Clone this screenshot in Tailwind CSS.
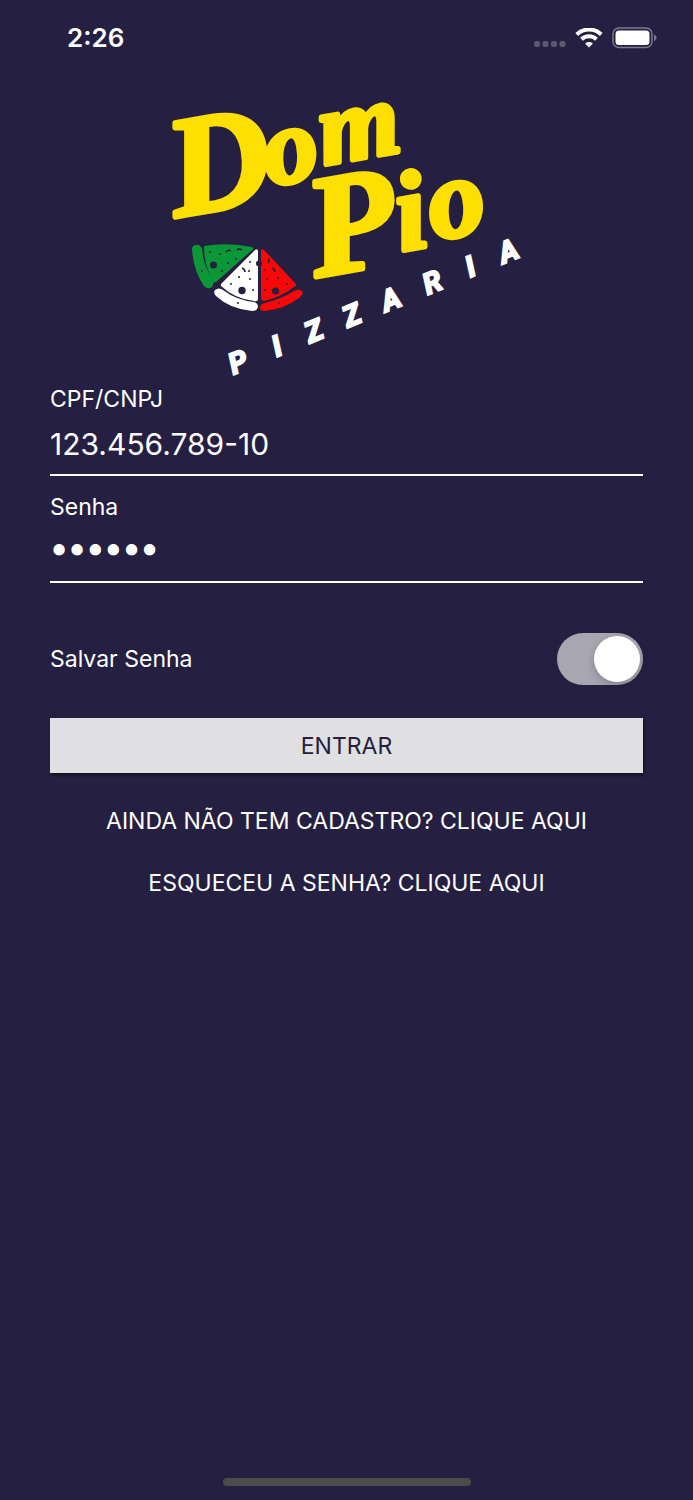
<!DOCTYPE html>
<html lang="pt-BR">
<head>
<meta charset="utf-8">
<meta name="viewport" content="width=device-width, initial-scale=1">
<title>Dom Pio Pizzaria</title>
<script src="https://cdn.jsdelivr.net/npm/@tailwindcss/browser@4"></script>
</head>
<body class="flex min-h-screen flex-col bg-[#252041] font-['Inter','Liberation_Sans',sans-serif] text-[23px] leading-7 text-white">
  <header class="flex h-20 items-start justify-between pt-6 pr-9 pl-[67px]">
    <time class="text-[26px] leading-7 font-semibold">2:26</time>
    <div class="flex h-7 items-center gap-[9px]">
      <svg class="mt-3 h-2 w-8" viewBox="0 0 32 8" fill="#5c5870" aria-hidden="true">
        <rect x="0" y="1" width="6" height="6" rx="2.300"/><rect x="8.500" y="1" width="6" height="6" rx="2.300"/><rect x="17" y="1" width="6" height="6" rx="2.300"/><rect x="25.500" y="1" width="6" height="6" rx="2.300"/>
      </svg>
      <svg class="h-5 w-7" viewBox="0 0 28 20" fill="none" stroke="#fff" aria-hidden="true">
        <path d="M1.800 6.500C8.500-.2 19.500-.2 26.200 6.500" stroke-width="4"/>
        <path d="M6.500 11.200C10.700 7.200 17.300 7.200 21.500 11.200" stroke-width="4"/>
        <path d="M10.200 15.600C12.300 13.600 15.700 13.600 17.800 15.600L14 19.500Z" fill="#fff" stroke="none"/>
      </svg>
      <svg class="h-[22px] w-[45px]" viewBox="0 0 45 22" aria-hidden="true">
        <rect x="1" y="1" width="39" height="19.500" rx="6" fill="none" stroke="#7c798d" stroke-width="1.500"/>
        <rect x="3.500" y="3.500" width="34" height="14.500" rx="3.500" fill="#fff"/>
        <path d="M42 7.500C45.300 8.800 45.300 12.700 42 14Z" fill="#7c798d"/>
      </svg>
    </div>
  </header>

  <main class="flex flex-col px-[50px]">
    <svg class="h-[300px] w-[370px] self-center overflow-visible" viewBox="162 80 370 300" role="img" aria-label="Dom Pio Pizzaria">
      <g fill="#fde000" stroke="#fde000" stroke-linejoin="round" font-family="Liberation Serif" font-weight="700" font-style="italic">
        <text transform="translate(176 217) rotate(-10)" font-size="142" stroke-width="5">D</text>
        <text transform="translate(269 186) rotate(-10)" font-size="108" stroke-width="5">o</text>
        <text transform="translate(324 165) rotate(-10)" font-size="104" stroke-width="5">m</text>
        <text transform="translate(316 277) rotate(-10)" font-size="144" stroke-width="5">P</text>
        <text transform="translate(401 251) rotate(-10)" font-size="112" stroke-width="5">i</text>
        <text transform="translate(434 240) rotate(-10)" font-size="112" stroke-width="5">o</text>
      </g>
      <g stroke-linejoin="round">
        <path d="M204 246Q228 242 252 247Q255 249 251 251L216 282Q214 283 212 280Q204 264 204 246Z" fill="#0b9735"/>
        <path d="M192 248Q194 244 199 245L202 248Q203 266 214 282L212 287Q208 290 204 286Q193 270 192 248Z" fill="#0b9735"/>
        <path d="M255 250Q258 248 258 252V299Q258 302 254 301Q235 299 221 286Q220 284 223 282Z" fill="#fff"/>
        <path d="M215 290Q219 287 223 290Q236 300 254 302Q258 303 258 307Q257 311 252 311Q230 309 216 296Q213 293 215 290Z" fill="#fff"/>
        <path d="M261 250Q263 248 266 252L295 283Q298 285 294 287Q281 297 264 301Q261 301 261 297Z" fill="#f90606"/>
        <path d="M265 303Q281 299 294 291Q299 288 302 291Q304 294 299 298Q284 309 265 311Q260 311 260 308Q260 304 265 303Z" fill="#f90606"/>
      </g>
      <g fill="#252041">
        <circle cx="213.500" cy="265" r="3.500"/><circle cx="242" cy="290.500" r="3.700"/><circle cx="275.500" cy="291" r="3.500"/><circle cx="259" cy="263.500" r="3"/>
        <circle cx="202" cy="271" r="1"/><circle cx="210" cy="252" r="1"/><circle cx="220" cy="254" r="1"/><circle cx="228" cy="263" r="1"/><circle cx="222" cy="271" r="1"/><circle cx="236" cy="259" r="1"/>
        <circle cx="250" cy="262" r="1"/><circle cx="249" cy="271" r="1"/><circle cx="239" cy="277" r="1"/><circle cx="250" cy="279" r="1"/><circle cx="231" cy="284" r="1"/><circle cx="253" cy="290" r="1"/><circle cx="238" cy="303" r="1"/>
        <circle cx="265" cy="270" r="1"/><circle cx="267" cy="279" r="1"/><circle cx="278" cy="278" r="1"/><circle cx="265" cy="290" r="1"/><circle cx="287" cy="284" r="1"/><circle cx="279" cy="303" r="1"/>
      </g>
      <g fill="none" stroke="#252041" stroke-width="1.500">
        <path d="M226 252Q228 249 231 251M237 250Q239 248 242 250M242 268Q245 269 245 272M268 259Q270 260 268 263M272 268Q275 269 275 272"/>
      </g>
      <text transform="translate(238 362) rotate(-22.300)" y="10" x="0 42 82 123 165 210 251 292" fill="#fff" stroke="#fff" stroke-width="2" font-family="Liberation Sans Narrow, Roboto" font-weight="700" font-style="italic" font-size="29" text-anchor="middle">PIZZARIA</text>
    </svg>

    <form class="flex flex-col">
      <label for="doc" class="mt-[5px]">CPF/CNPJ</label>
      <input id="doc" type="text" value="123.456.789-10" class="mt-2 h-[55px] w-full border-b-2 border-white bg-transparent pb-2 text-[30px] outline-none">
      <label for="senha" class="mt-[17px]">Senha</label>
      <input id="senha" type="password" value="123456" class="mt-2 h-[54px] w-full border-b-2 border-white bg-transparent pb-4 text-[36px] font-semibold outline-none">

      <div class="mt-[50px] flex h-[52px] items-center justify-between">
        <label for="salvar">Salvar Senha</label>
        <input id="salvar" type="checkbox" role="switch" checked class="flex h-[52px] w-[86px] appearance-none items-center rounded-full bg-[#a7a6b1] p-[3px] before:size-[46px] before:rounded-full before:bg-white before:shadow-[0_3px_8px_#0003] checked:before:ml-auto">
      </div>

      <button type="submit" class="mt-[33px] h-[55px] bg-[#e0e0e2] text-[#252041] shadow-[1px_2px_3px_#0009]">ENTRAR</button>
    </form>

    <nav class="mt-[34px] flex flex-col items-center gap-[34px] text-center">
      <a href="#cadastro">AINDA NÃO TEM CADASTRO? CLIQUE AQUI</a>
      <a href="#recuperar">ESQUECEU A SENHA? CLIQUE AQUI</a>
    </nav>
  </main>

  <div class="mt-auto mb-[14px] h-2 w-[248px] self-center rounded-full bg-[#4b4b4b]"></div>
</body>
</html>
